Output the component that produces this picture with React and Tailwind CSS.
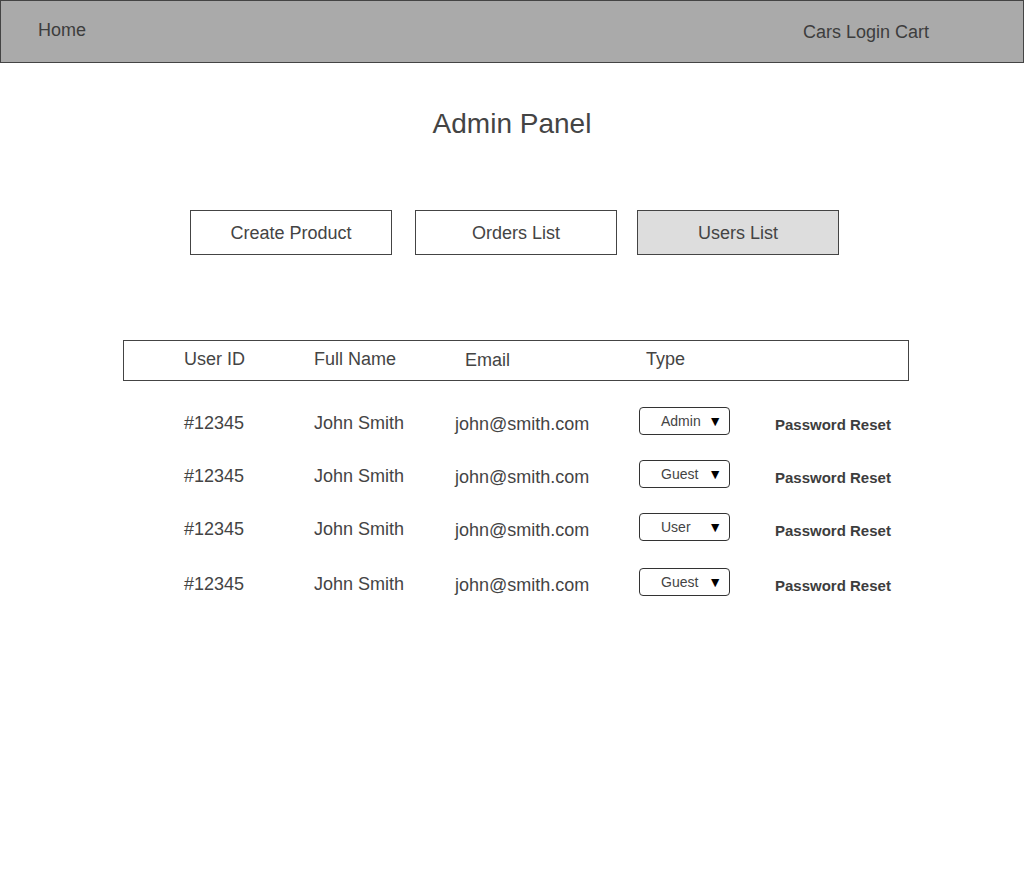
import React from 'react';

const users = [
  { id: '#12345', name: 'John Smith', email: 'john@smith.com', type: 'Admin', mt: 'mt-[28px]' },
  { id: '#12345', name: 'John Smith', email: 'john@smith.com', type: 'Guest', mt: 'mt-[25px]' },
  { id: '#12345', name: 'John Smith', email: 'john@smith.com', type: 'User', mt: 'mt-[25px]' },
  { id: '#12345', name: 'John Smith', email: 'john@smith.com', type: 'Guest', mt: 'mt-[27px]' },
];

function TypeSelect({ value }) {
  return (
    <div className="w-[91px] h-[28px] border border-[#333] rounded-[4px] flex items-center justify-between pl-[21px] pr-[7px] text-[14px] text-[#444]">
      <span>{value}</span>
      <span className="text-black text-[14px]">▼</span>
    </div>
  );
}

export default function App() {
  return (
    <div className="w-[1024px] min-h-[895px] bg-white text-[#444] font-['Liberation_Sans',Arial,sans-serif]">
      {/* top bar */}
      <div className="h-[63px] bg-[#aaaaaa] border border-[#444] flex justify-between pl-[37px] pr-[94px]">
        <a className="text-[18px] mt-[16px] text-[#3d3d3d]">Home</a>
        <div className="text-[18px] mt-[18px] text-[#3d3d3d]">Cars Login Cart</div>
      </div>

      <h1 className="text-center text-[28px] mt-[44px] leading-[34px]">Admin Panel</h1>

      <div className="flex pl-[190px] gap-[23px] mt-[69px]">
        <button className="w-[202px] h-[45px] border border-[#444] text-[18px] bg-white pt-[2px]">Create Product</button>
        <button className="w-[202px] h-[45px] border border-[#444] text-[18px] bg-white pt-[2px]">Orders List</button>
        <button className="w-[202px] h-[45px] border border-[#444] text-[18px] bg-[#dddddd] -ml-[3px] pt-[2px]">Users List</button>
      </div>

      <div className="ml-[123px] w-[786px] mt-[85px]">
        <div className="h-[41px] border border-[#444] flex items-center pl-[60px] text-[18px] pb-[2px]">
          <span className="w-[130px]">User ID</span>
          <span className="w-[151px]">Full Name</span>
          <span className="w-[181px] mt-[2px]">Email</span>
          <span>Type</span>
        </div>

        {users.map((u, i) => (
          <div key={i} className={`flex items-center h-[28px] pl-[61px] text-[18px] ${u.mt}`}>
            <span className="w-[130px]">{u.id}</span>
            <span className="w-[141px]">{u.name}</span>
            <span className="w-[184px] mt-[2px]">{u.email}</span>
            <div className="w-[136px] mb-[4px]">
              <TypeSelect value={u.type} />
            </div>
            <span className="text-[15px] font-bold mt-[4px] text-[#3d3d3d]">Password Reset</span>
          </div>
        ))}
      </div>
    </div>
  );
}
